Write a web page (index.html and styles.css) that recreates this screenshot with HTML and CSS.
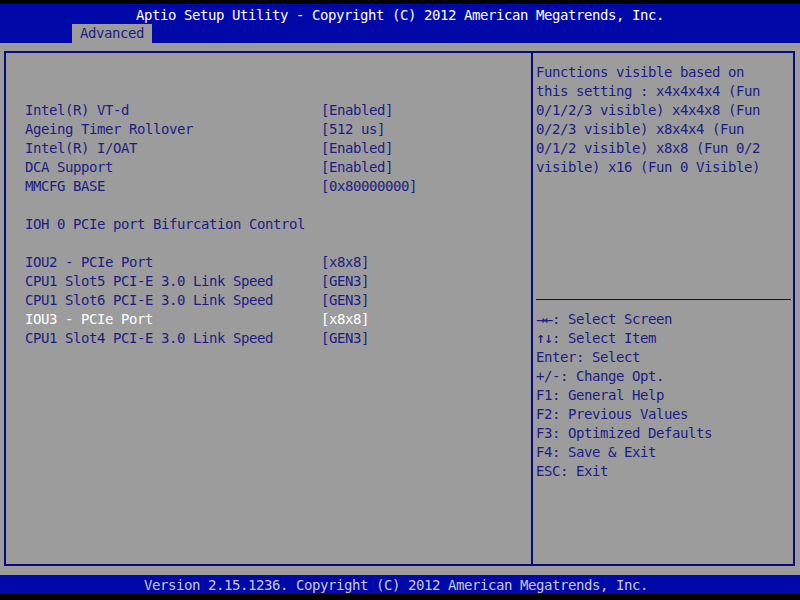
FILE: index.html
```html
<!DOCTYPE html>
<html>
<head>
    <title>Aptio Setup Utility</title>
    <link rel="stylesheet" href="styles.css">
</head>
<body>
    <div class="screen">
        <header class="top-bar">
            <div class="title">Aptio Setup Utility - Copyright (C) 2012 American Megatrends, Inc.</div>
            <div class="tabs">
                <span class="tab active">Advanced</span>
            </div>
        </header>

        <div class="main">
            <div class="frame">
                <div class="settings">
                    <div class="blank"></div>
                    <div class="blank"></div>
                    <div class="item"><span>Intel(R) VT-d</span><span>[Enabled]</span></div>
                    <div class="item"><span>Ageing Timer Rollover</span><span>[512 us]</span></div>
                    <div class="item"><span>Intel(R) I/OAT</span><span>[Enabled]</span></div>
                    <div class="item"><span>DCA Support</span><span>[Enabled]</span></div>
                    <div class="item"><span>MMCFG BASE</span><span>[0x80000000]</span></div>
                    <div class="blank"></div>
                    <div class="item label">IOH 0 PCIe port Bifurcation Control</div>
                    <div class="blank"></div>
                    <div class="item"><span>IOU2 - PCIe Port</span><span>[x8x8]</span></div>
                    <div class="item"><span>CPU1 Slot5 PCI-E 3.0 Link Speed</span><span>[GEN3]</span></div>
                    <div class="item"><span>CPU1 Slot6 PCI-E 3.0 Link Speed</span><span>[GEN3]</span></div>
                    <div class="item selected"><span>IOU3 - PCIe Port</span><span>[x8x8]</span></div>
                    <div class="item"><span>CPU1 Slot4 PCI-E 3.0 Link Speed</span><span>[GEN3]</span></div>
                </div>

                <div class="side">
                    <div class="help">
                        <div>Functions visible based on</div>
                        <div>this setting : x4x4x4x4 (Fun</div>
                        <div>0/1/2/3 visible) x4x4x8 (Fun</div>
                        <div>0/2/3 visible) x8x4x4 (Fun</div>
                        <div>0/1/2 visible) x8x8 (Fun 0/2</div>
                        <div>visible) x16 (Fun 0 Visible)</div>
                    </div>
                    <div class="rule"></div>
                    <div class="keys">
                        <div><b class="arrows">&rarr;&larr;</b>: Select Screen</div>
                        <div><b class="arrows">&uarr;&darr;</b>: Select Item</div>
                        <div>Enter: Select</div>
                        <div>+/-: Change Opt.</div>
                        <div>F1: General Help</div>
                        <div>F2: Previous Values</div>
                        <div>F3: Optimized Defaults</div>
                        <div>F4: Save &amp; Exit</div>
                        <div>ESC: Exit</div>
                    </div>
                </div>
            </div>
        </div>

        <footer class="bottom-bar">Version 2.15.1236. Copyright (C) 2012 American Megatrends, Inc.</footer>
    </div>
</body>
</html>
```

FILE: styles.css
```css
/* whole screen */
body {
    margin: 0;
    background: #000;
}
.screen {
    width: 800px;
    height: 600px;
    padding-top: 4px;
    box-sizing: border-box;
    display: flex;
    flex-direction: column;
    font-family: "DejaVu Sans Mono", "Liberation Mono", monospace;
    font-size: 14px;
    letter-spacing: -0.43px;
    line-height: 19px;
    color: #1c1c84;
}

/* blue title bar */
.top-bar {
    background: #0008a8;
    height: 39px;
}
.title {
    height: 20px;
    padding-top: 2px;
    box-sizing: border-box;
    text-align: center;
    color: #fff;
}
.tabs {
    display: flex;
    padding-left: 72px;
}
.tab {
    height: 19px;
    padding: 0 8px;
}
.tab.active {
    background: #9c9c9c;
    color: #1c1c84;
}

/* gray area with the framed panels */
.main {
    flex: 1;
    background: #9c9c9c;
    padding: 8px 5px 9px 4px;
}
.frame {
    height: 100%;
    box-sizing: border-box;
    border: 2px solid #0a0a80;
    display: flex;
}
.settings {
    width: 527px;
    border-right: 2px solid #0a0a80;
    padding: 10px 0 0 19px;
    box-sizing: border-box;
}
.blank {
    height: 19px;
}
.item {
    display: grid;
    grid-template-columns: 296px auto;
    height: 19px;
    white-space: pre;
}
.item.selected {
    color: #fff;
}

.side {
    flex: 1;
    display: flex;
    flex-direction: column;
    padding-left: 3px;
}
.help {
    height: 236px;
    padding-top: 10px;
}
.rule {
    height: 1px;
    background: #0a0a80;
    margin-right: 2px;
}
.keys {
    margin-top: 10px;
}
.keys div {
    height: 19px;
}
.arrows {
    font-family: "DejaVu Sans", sans-serif;
    font-size: 11px;
    font-weight: bold;
    letter-spacing: -1.2px;
    line-height: 0;
}

/* version line */
.bottom-bar {
    background: #0008a8;
    height: 19px;
    padding-top: 1px;
    box-sizing: border-box;
    margin-bottom: 6px;
    padding-left: 144px;
    color: #c8c8c8;
}
```
